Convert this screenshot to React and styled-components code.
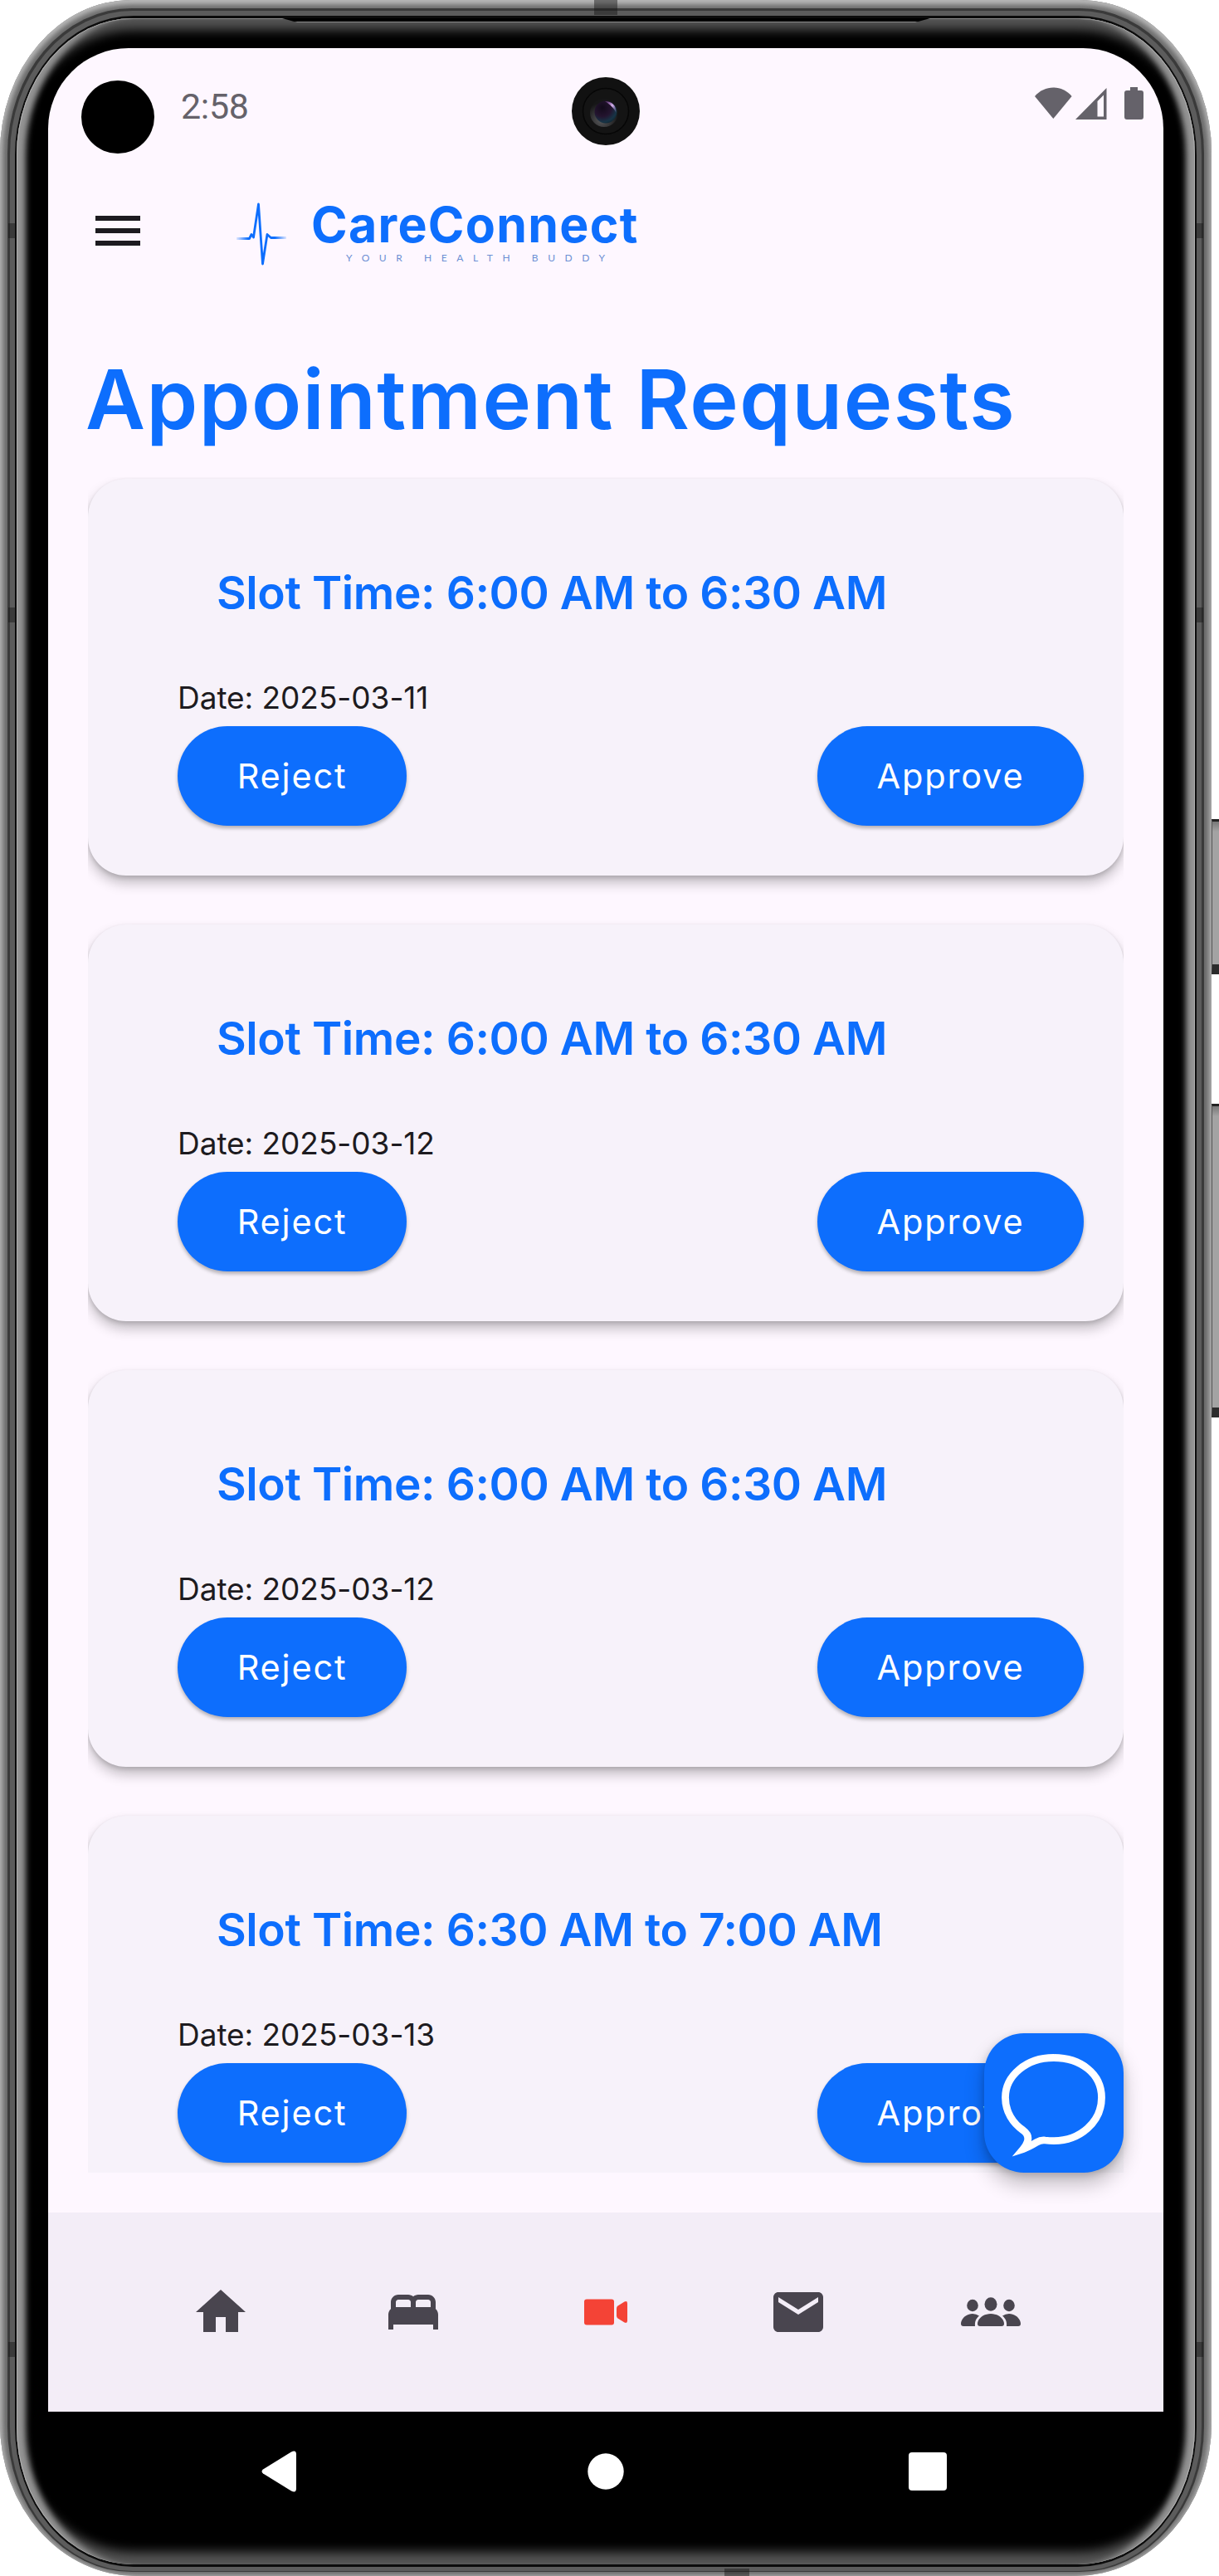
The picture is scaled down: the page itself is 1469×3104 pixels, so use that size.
import React from "react";
import styled, { createGlobalStyle } from "styled-components";

const BLUE = "#0d6efd";
const INK = "#49454f";

const GlobalStyle = createGlobalStyle`
  *, *::before, *::after { box-sizing: border-box; }
  html, body { margin: 0; padding: 0; background: #fff; }
  body { font-family: Inter, "Open Sans", sans-serif; }
`;

const Stage = styled.div`
  width: 1469px;
  height: 3104px;
  display: flex;
  overflow: hidden;
  background: #fff;
`;

const Shell = styled.div`
  position: relative;
  flex: none;
  width: 1460px;
  height: 3104px;
  padding: 10px 9px 5px;
  border-radius: 158px 158px 164px 164px / 184px 184px 184px 184px;
  background: #6b6b6b;
  box-shadow: inset 0 5px 7px #b8b8b8, inset 3px 0 6px #a8a8a8, inset -3px 0 6px #a0a0a0;
`;

const DarkRing = styled.div`
  height: 100%;
  padding: 3px 3px 1px;
  border-radius: 150px / 175px;
  background: #3a3a3a;
`;

const MidRing = styled.div`
  height: 100%;
  padding: 6px 6px 5px;
  border-radius: 148px / 173px;
  background: #5c5c5c;
`;

const BlackRing = styled.div`
  height: 100%;
  padding: 3px 2px;
  border-radius: 143px / 168px;
  background: #0c0c0c;
`;

const Bezel = styled.div`
  position: relative;
  height: 100%;
  padding: 36px 38px 40px;
  border-radius: 140px / 165px;
  overflow: hidden;
  background: #000;
  box-shadow: inset 1px 0 0 #b0b0b0, inset -1px 0 0 #b0b0b0, inset 0 1px 0 #8a8a8a,
    inset 16px 0 7px -5px #949494, inset -16px 0 7px -5px #949494,
    inset 0 21px 13px -7px #545454, inset 0 -22px 13px -7px #545454;
`;

const Earpiece = styled.div`
  position: absolute;
  top: 0;
  left: 320px;
  width: 781px;
  height: 5px;
  background: #000;
  border-bottom: 1px solid #8a8a8a;
  clip-path: polygon(0 0, 100% 0, calc(100% - 18px) 100%, 18px 100%);
`;

const AntennaBand = styled.div`
  position: absolute;
  left: ${(p) => p.$x}px;
  top: ${(p) => p.$y}px;
  width: ${(p) => p.$w}px;
  height: ${(p) => p.$h}px;
  background: rgba(20, 20, 20, 0.45);
`;

const Keys = styled.div`
  flex: none;
  width: 9px;
  padding-top: 987px;
  display: flex;
  flex-direction: column;
  gap: 156px;
`;

const SideKey = styled.div`
  height: ${(p) => p.$h}px;
  border-top: 3px solid #222;
  border-bottom: 12px solid #2b2b2b;
  border-left: 1px solid #555;
  background: linear-gradient(to bottom, #777, #a3a3a3 12px);
`;

const Screen = styled.div`
  position: relative;
  width: 1344px;
  height: 2992px;
  display: flex;
  flex-direction: column;
  overflow: hidden;
  border-radius: 97px 97px 130px 130px;
  background: linear-gradient(to bottom, #fef7ff 2800px, #000 2800px);
`;

const StatusBar = styled.div`
  flex: none;
  height: 156px;
  padding: 39px 23px 0 40px;
  display: flex;
  align-items: flex-start;
`;

const Cutout = styled.div`
  width: 88px;
  height: 88px;
  border-radius: 50%;
  background: #000;
`;

const Clock = styled.div`
  margin: 4px 0 0 32px;
  flex: 1;
  font: 400 43px/54px Roboto, sans-serif;
  letter-spacing: -0.3px;
  color: #65626a;
`;

const StatusIcons = styled.svg`
  width: 132px;
  height: 40px;
  margin-top: 8px;
`;

const Lens = styled.svg`
  position: absolute;
  top: 35px;
  left: 631px;
  width: 82px;
  height: 82px;
`;

const AppBar = styled.header`
  flex: none;
  height: 142px;
  padding: 28px 0 0 48px;
  display: flex;
  align-items: flex-start;
`;

const MenuIcon = styled.svg`
  width: 72px;
  height: 72px;
  fill: #1d1b20;
`;

const Pulse = styled.svg`
  width: 64px;
  height: 78px;
  margin: 1px 0 0 105px;
`;

const Brand = styled.div`
  margin: -1px 0 0 28px;
  width: 420px;
  display: flex;
  flex-direction: column;
`;

const BrandName = styled.div`
  font: 700 59px/60px Inter, sans-serif;
  letter-spacing: 1.3px;
  color: ${BLUE};
  white-space: nowrap;
`;

const Tagline = styled.div`
  margin: 3px 0 0 42px;
  font: 400 12px/14px Lato, sans-serif;
  letter-spacing: 11.6px;
  color: #6d90d4;
  white-space: nowrap;
`;

const Content = styled.main`
  flex: 1;
  min-height: 0;
  padding: 0 48px 48px;
  display: flex;
  flex-direction: column;
`;

const Title = styled.h1`
  flex: none;
  margin: 0 0 0 -3px;
  height: 221px;
  padding-top: 65px;
  font: 600 99px/120px Inter, sans-serif;
  letter-spacing: 1.5px;
  color: ${BLUE};
  white-space: nowrap;
`;

const RequestList = styled.div`
  flex: 1;
  min-height: 0;
  margin-top: -2px;
  padding-top: 2px;
  overflow: hidden;
  display: flex;
  flex-direction: column;
  gap: 59px;
`;

const Card = styled.article`
  flex: none;
  height: 478px;
  padding: 104px 48px 0 108px;
  border-radius: 46px;
  background: #f7f2fa;
  box-shadow: 0 9px 15px rgba(0, 0, 0, 0.24), 0 3px 5px rgba(0, 0, 0, 0.12), 0 0 3px rgba(0, 0, 0, 0.03);
`;

const SlotTime = styled.h2`
  margin: 0 0 0 47px;
  font: 600 55px/66px Inter, sans-serif;
  letter-spacing: -0.4px;
  color: ${BLUE};
  white-space: nowrap;
`;

const DateLine = styled.div`
  margin: 71px 0 0;
  height: 57px;
  font: 400 37px/46px Inter, sans-serif;
  letter-spacing: -0.05px;
  color: #1d1b20;
  white-space: nowrap;
`;

const Actions = styled.div`
  display: flex;
  justify-content: space-between;
`;

const Pill = styled.button`
  width: ${(p) => p.$w}px;
  height: 120px;
  padding: 0;
  border: 0;
  border-radius: 60px;
  background: ${BLUE};
  box-shadow: 0 3px 4px rgba(0, 0, 0, 0.28);
  color: #fff;
  font: 400 41.5px/120px Inter, sans-serif;
  letter-spacing: 1.8px;
`;

const ChatFab = styled.button`
  position: absolute;
  left: 1128px;
  top: 2392px;
  width: 168px;
  height: 168px;
  padding: 0;
  border: 0;
  border-radius: 48px;
  background: ${BLUE};
  box-shadow: 0 14px 24px rgba(0, 0, 0, 0.24), 0 3px 10px rgba(0, 0, 0, 0.16);
  svg { display: block; width: 168px; height: 168px; }
`;

const TabBar = styled.nav`
  flex: none;
  height: 240px;
  padding: 0 92px;
  display: flex;
  align-items: center;
  background: #f3edf7;
`;

const Tab = styled.div`
  flex: 1;
  display: flex;
  justify-content: center;
  color: ${(p) => (p.$active ? "#f44336" : INK)};
  svg { width: 76px; height: 72px; fill: currentColor; overflow: visible; }
`;

const SystemNav = styled.div`
  flex: none;
  height: 144px;
  padding: 0 85px;
  display: flex;
  align-items: center;
  justify-content: space-around;
  background: #000;
  svg { width: 60px; height: 60px; fill: #fff; }
`;

const requests = [
  { slot: "6:00 AM to 6:30 AM", date: "2025-03-11" },
  { slot: "6:00 AM to 6:30 AM", date: "2025-03-12" },
  { slot: "6:00 AM to 6:30 AM", date: "2025-03-12" },
  { slot: "6:30 AM to 7:00 AM", date: "2025-03-13" },
];

const bands = [
  [10, 269, 9, 18], [10, 732, 9, 18], [10, 2822, 9, 18],
  [1441, 269, 9, 18], [1441, 732, 9, 18], [1441, 2822, 9, 18],
  [716, 0, 28, 18], [873, 3095, 30, 9],
];

function Request({ slot, date }) {
  return (
    <Card>
      <SlotTime>Slot Time: {slot}</SlotTime>
      <DateLine>Date: {date}</DateLine>
      <Actions>
        <Pill $w={276}>Reject</Pill>
        <Pill $w={321}>Approve</Pill>
      </Actions>
    </Card>
  );
}

function CameraLens() {
  return (
    <Lens viewBox="0 0 82 82">
      <defs>
        <radialGradient id="rim" cx="0.4" cy="0.75" r="0.6">
          <stop offset="0" stopColor="#5a5a5c" />
          <stop offset="1" stopColor="#161617" />
        </radialGradient>
        <radialGradient id="glass" cx="0.35" cy="0.3" r="0.8">
          <stop offset="0" stopColor="#120a1a" />
          <stop offset="0.5" stopColor="#24142f" />
          <stop offset="0.8" stopColor="#173446" />
          <stop offset="1" stopColor="#10222c" />
        </radialGradient>
        <linearGradient id="glint" x1="0" y1="0" x2="1" y2="1">
          <stop offset="0" stopColor="#8a4aa8" stopOpacity="0.4" />
          <stop offset="0.5" stopColor="#d9b4ee" />
          <stop offset="1" stopColor="#7d7ac0" stopOpacity="0.2" />
        </linearGradient>
      </defs>
      <circle cx="41" cy="41" r="41" fill="#111" />
      <circle cx="41" cy="41" r="27.500" fill="#141414" stroke="#060606" strokeWidth="1.500" />
      <circle cx="39" cy="43" r="17" fill="url(#rim)" />
      <circle cx="41" cy="42" r="13.500" fill="url(#glass)" />
      <path d="M40 29c8 0 14 5 13.500 14-2-5-7-10-13.500-14z" fill="url(#glint)" />
    </Lens>
  );
}

export default function App() {
  return (
    <Stage>
      <GlobalStyle />
      <Shell>
        <DarkRing>
          <MidRing>
            <BlackRing>
              <Bezel>
                <Earpiece />
                <Screen>
                  <StatusBar>
                    <Cutout />
                    <Clock>2:58</Clock>
                    <StatusIcons viewBox="0 0 132 40" fill="#65626a">
                      <path d="M0 11C6 4 14 .5 22.300 .5S38.600 4 44.600 11L22.300 38z" />
                      <path fillRule="evenodd" d="M49 39 86.500 1v38zM75.500 17v18.500h7.500V9.500z" />
                      <path d="M115 0h9v4h4q3 0 3 3v29q0 3-3 3h-17q-3 0-3-3V7q0-3 3-3h4z" />
                    </StatusIcons>
                  </StatusBar>
                  <CameraLens />
                  <AppBar>
                    <MenuIcon viewBox="0 0 24 24">
                      <path d="M3 18h18v-2H3v2zm0-5h18v-2H3v2zm0-7v2h18V6H3z" />
                    </MenuIcon>
                    <Pulse viewBox="0 0 64 78">
                      <defs>
                        <linearGradient id="trace" x1="0" x2="64" y1="0" y2="0" gradientUnits="userSpaceOnUse">
                          <stop offset="0" stopColor={BLUE} stopOpacity="0" />
                          <stop offset="0.25" stopColor={BLUE} />
                          <stop offset="0.75" stopColor={BLUE} />
                          <stop offset="1" stopColor={BLUE} stopOpacity="0" />
                        </linearGradient>
                      </defs>
                      <path
                        d="M2 44.500H17.500L20 39.500 22.500 43 28.500 3 33.500 75 39 39.500 43.500 43.500H62"
                        fill="none"
                        stroke="url(#trace)"
                        strokeWidth="2.800"
                        strokeLinejoin="round"
                      />
                    </Pulse>
                    <Brand>
                      <BrandName>CareConnect</BrandName>
                      <Tagline>YOUR HEALTH BUDDY</Tagline>
                    </Brand>
                  </AppBar>
                  <Content>
                    <Title>Appointment Requests</Title>
                    <RequestList>
                      {requests.map((r, i) => (
                        <Request key={i} {...r} />
                      ))}
                    </RequestList>
                  </Content>
                  <ChatFab aria-label="Chat">
                    <svg viewBox="0 0 168 168">
                      <path
                        d="M83.500 29.500C51 29.500 25.500 51 25.500 77.500c0 17 9 31 21.500 39.500 5.500 4 7 8.500 5 14-1 3.500-2.500 5.500-5 8.500 6-2 11-5 16-8 4-2.300 7-3 10.500-2.500 3.500 .4 6.500 .6 10 .6 32.500 0 58-23 58-52.100S116 29.500 83.500 29.500z"
                        fill="none"
                        stroke="#fff"
                        strokeWidth="8.800"
                      />
                    </svg>
                  </ChatFab>
                  <TabBar>
                    <Tab>
                      <svg viewBox="0 0 24 24"><path d="M10 20v-6h4v6h5v-8h3L12 3 2 12h3v8z" /></svg>
                    </Tab>
                    <Tab>
                      <svg viewBox="0 0 24 24"><path d="M21 10.780V8c0-1.650-1.350-3-3-3h-4c-.77 0-1.470.3-2 .78-.53-.48-1.230-.78-2-.78H6C4.350 5 3 6.350 3 8v2.780c-.61.55-1 1.340-1 2.220v6h2v-2h16v2h2v-6c0-.88-.39-1.670-1-2.220zM14 7h4c.55 0 1 .45 1 1v2h-6V8c0-.55.45-1 1-1zM5 8c0-.55.45-1 1-1h4c.55 0 1 .45 1 1v2H5V8z" /></svg>
                    </Tab>
                    <Tab $active>
                      <svg viewBox="0 0 76 72">
                        <rect x="12" y="20.500" width="36" height="31" rx="3" />
                        <path d="M51 31.500q0-2 1.500-3l8-5q3.500-1.500 3.500 2v21q0 3.500-3.500 2l-8-5q-1.500-1-1.500-3z" />
                      </svg>
                    </Tab>
                    <Tab>
                      <svg viewBox="0 0 24 24"><path d="M20 4H4c-1.100 0-1.990.9-1.990 2L2 18c0 1.100.9 2 2 2h16c1.100 0 2-.9 2-2V6c0-1.100-.9-2-2-2zm0 4-8 5-8-5V6l8 5 8-5v2z" /></svg>
                    </Tab>
                    <Tab>
                      <svg viewBox="0 0 76 72">
                        <ellipse cx="16" cy="28" rx="6.800" ry="7.200" />
                        <ellipse cx="60" cy="28" rx="6.800" ry="7.200" />
                        <ellipse cx="38" cy="26.500" rx="7.500" ry="8.300" />
                        <path d="M5 53q-3 0-3-3c0-5.500 6-12 14-12q4.500 0 8 2.500c-4 3.500-5.500 7-5 12.500z" />
                        <path d="M71 53q3 0 3-3c0-5.500-6-12-14-12q-4.500 0-8 2.500c4 3.500 5.500 7 5 12.500z" />
                        <path d="M25 53q-3 0-3-3c0-6 7-12 16-12s16 6 16 12q0 3-3 3z" />
                      </svg>
                    </Tab>
                  </TabBar>
                  <SystemNav>
                    <svg viewBox="0 0 60 60"><path d="M8 27.500 42 6.500q6-3 6 3v41q0 6-6 3L8 32.500q-3-2.500 0-5z" /></svg>
                    <svg viewBox="0 0 60 60"><circle cx="30" cy="30" r="21.700" /></svg>
                    <svg viewBox="0 0 60 60"><rect x="4" y="7" width="46" height="46" rx="4" /></svg>
                  </SystemNav>
                </Screen>
              </Bezel>
            </BlackRing>
          </MidRing>
        </DarkRing>
        {bands.map(([x, y, w, h]) => (
          <AntennaBand key={`${x}-${y}`} $x={x} $y={y} $w={w} $h={h} />
        ))}
      </Shell>
      <Keys>
        <SideKey $h={187} />
        <SideKey $h={378} />
      </Keys>
    </Stage>
  );
}
